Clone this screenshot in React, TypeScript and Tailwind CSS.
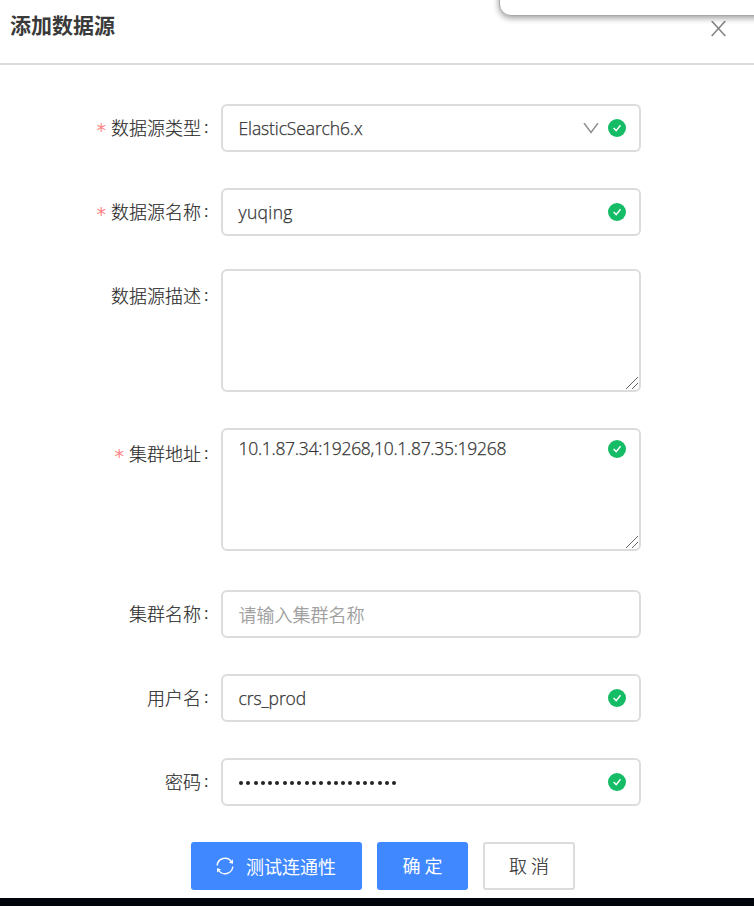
import React from 'react';

const cjk = "font-['Noto_Sans','Noto_Sans_CJK_SC',sans-serif]";

function Check() {
  return (
    <svg className="h-[18px] w-[18px] shrink-0" viewBox="0 0 18 18" fill="none">
      <circle cx="9" cy="9" r="9" fill="#15bc66" />
      <path d="M5.6 9 8.2 11.6 12.5 6.2" stroke="#fff" strokeWidth="1.4" />
    </svg>
  );
}

function Grip() {
  return (
    <svg className="absolute right-px bottom-px h-3 w-3" viewBox="0 0 12 12" stroke="#555" strokeWidth="0.9" fill="none">
      <path d="M0 12 12 0M6 12 12 6" />
    </svg>
  );
}

type RowProps = {
  label: string;
  required?: boolean;
  height?: string;
  gap: string;
  labelPad?: string;
  children?: React.ReactNode;
};

function Row({ label, required, height = 'h-12', gap, labelPad = 'pt-[9px]', children }: RowProps) {
  return (
    <div className={`flex ${gap}`}>
      <div className={`flex w-[221px] shrink-0 justify-end pr-[13px] text-[18px] leading-7 text-[#2a2a2a] ${labelPad}`}>
        {required && (
          <span className="mr-[5px] pt-[3px] font-['DejaVu_Sans',sans-serif] text-[19px] text-[#ff8585]">*</span>
        )}
        <span className="font-['Noto_Sans_CJK_SC',sans-serif] font-light [-webkit-text-stroke:0.15px]">{label}</span>
        <span className="ml-[3px] w-1 font-['Open_Sans',sans-serif] text-[17px]">:</span>
      </div>
      <div className={`relative flex w-[420px] rounded-[6px] border-2 border-[#dcdcdc] bg-white pr-[13px] pl-[15.5px] font-['Open_Sans','Noto_Sans',sans-serif] text-[17.5px] font-light text-[#333] [-webkit-text-stroke:0.25px] ${height}`}>
        {children}
      </div>
    </div>
  );
}

export default function App() {
  return (
    <div className={`relative flex h-[906px] w-[754px] flex-col overflow-hidden bg-white ${cjk}`}>
      <header className="flex h-[65px] shrink-0 justify-between border-b-2 border-[#dcdcdc] pr-[28px] pl-[10px]">
        <h1 className="pt-[9px] text-[21px] leading-8 font-bold text-[#3a3a3a]">添加数据源</h1>
        <svg className="mt-[21px] h-4 w-[15px]" viewBox="0 0 15 16" stroke="#858585" strokeWidth="1.6" fill="none">
          <path d="M.7 0 14.3 15M14.3 0 .7 15" />
        </svg>
      </header>
      <div className="absolute -top-5 left-[499px] h-9 w-[280px] rounded-xl border border-[#aaa] bg-white shadow-[0_2px_6px_rgba(0,0,0,0.4)]" />

      <Row label="数据源类型" required gap="mt-[39px]">
        <span className="flex-1 self-center pt-px tracking-[-0.12px]">ElasticSearch6.x</span>
        <svg className="mr-[9px] h-[11px] w-4 self-center" viewBox="0 0 16 11" stroke="#909090" strokeWidth="1.5" fill="none">
          <path d="M1 0 8 9.5 15 0" />
        </svg>
        <span className="self-center"><Check /></span>
      </Row>
      <Row label="数据源名称" required gap="mt-9">
        <span className="flex-1 self-center pt-px tracking-[0.35px]">yuqing</span>
        <span className="self-center"><Check /></span>
      </Row>
      <Row label="数据源描述" gap="mt-[33px]" height="h-[123px]" labelPad="pt-[12px]">
        <Grip />
      </Row>
      <Row label="集群地址" required gap="mt-9" height="h-[123px]" labelPad="pt-[11px]">
        <span className="flex-1 pt-[4px] leading-7 tracking-[-0.28px]">10.1.87.34:19268,10.1.87.35:19268</span>
        <span className="pt-[10px]"><Check /></span>
        <Grip />
      </Row>
      <Row label="集群名称" gap="mt-[39px]">
        <span className="self-center font-['Noto_Sans_CJK_SC',sans-serif] text-[18px] font-light text-[#999]">请输入集群名称</span>
      </Row>
      <Row label="用户名" gap="mt-9">
        <span className="flex-1 self-center pt-px tracking-[-0.1px]">crs_prod</span>
        <span className="self-center"><Check /></span>
      </Row>
      <Row label="密码" gap="mt-9">
        <span className="flex flex-1 gap-[3.3px] self-center pt-[2px] pl-[0.5px]">
          {Array.from({ length: 22 }, (_, i) => (
            <i key={i} className="h-1 w-1 rounded-full bg-[#222]" />
          ))}
        </span>
        <span className="self-center"><Check /></span>
      </Row>

      <div className="mt-9 flex h-12 shrink-0 pl-[191px] font-['Noto_Sans_CJK_SC',sans-serif] text-[18px]">
        <button className="flex w-[171px] items-center rounded-[3px] bg-[#4088ff] pl-[25px] text-white">
          <svg className="mr-3 h-[18px] w-[18px]" viewBox="0 0 18 18" stroke="#fff" strokeWidth="1.4" fill="none">
            <path d="M1.2 8.5A7.8 7.8 0 0 1 15.6 5M16.8 9.5A7.8 7.8 0 0 1 2.4 13" />
            <path d="M17 2.4v4.3l-4.1-.9zM1 15.6v-4.3l4.1.9z" fill="#fff" stroke="none" />
          </svg>
          <span>测试连通性</span>
        </button>
        <button className="ml-[15px] w-[91px] rounded-[3px] bg-[#4088ff] pb-px text-white">确 定</button>
        <button className="ml-[15px] w-[92px] rounded-[3px] border-2 border-[#dcdcdc] pb-px font-light text-[#2a2a2a] [-webkit-text-stroke:0.15px]">取 消</button>
      </div>
      <div className="mt-2 h-2 shrink-0 bg-[#02040c]" />
    </div>
  );
}
